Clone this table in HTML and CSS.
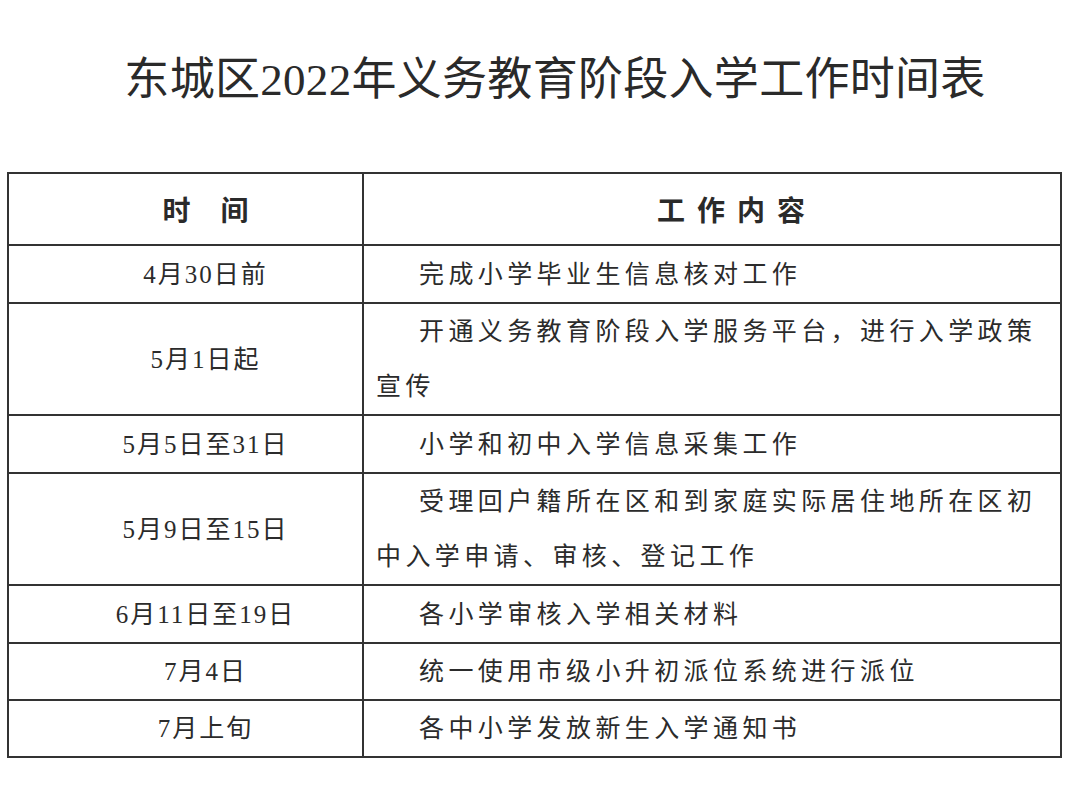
FILE: index.html
```html
<!DOCTYPE html>
<html lang="zh-CN">
<head>
<meta charset="utf-8">
<title>东城区2022年义务教育阶段入学工作时间表</title>
<link rel="stylesheet" href="styles.css">
</head>
<body>
<div class="page">
  <h1 class="title">东城区2022年义务教育阶段入学工作时间表</h1>
  <table class="schedule">
    <colgroup>
      <col class="col-time">
      <col class="col-work">
    </colgroup>
    <thead>
      <tr>
        <th class="h-time"><span class="gap">时</span>间</th>
        <th class="h-work">工作内容</th>
      </tr>
    </thead>
    <tbody>
      <tr>
        <td class="time">4月30日前</td>
        <td class="work">完成小学毕业生信息核对工作</td>
      </tr>
      <tr>
        <td class="time">5月1日起</td>
        <td class="work">开通义务教育阶段入学服务平台，进行入学政策宣传</td>
      </tr>
      <tr>
        <td class="time">5月5日至31日</td>
        <td class="work">小学和初中入学信息采集工作</td>
      </tr>
      <tr>
        <td class="time">5月9日至15日</td>
        <td class="work">受理回户籍所在区和到家庭实际居住地所在区初中入学申请、审核、登记工作</td>
      </tr>
      <tr>
        <td class="time">6月11日至19日</td>
        <td class="work">各小学审核入学相关材料</td>
      </tr>
      <tr class="short">
        <td class="time">7月4日</td>
        <td class="work">统一使用市级小升初派位系统进行派位</td>
      </tr>
      <tr class="short">
        <td class="time">7月上旬</td>
        <td class="work">各中小学发放新生入学通知书</td>
      </tr>
    </tbody>
  </table>
</div>
</body>
</html>
```

FILE: styles.css
```css
html, body {
  margin: 0;
  padding: 0;
  background: #ffffff;
}

body {
  font-family: "Liberation Serif", "Noto Sans CJK SC", serif;
  color: #2b2b2b;
}

.page {
  width: 1080px;
  height: 785px;
  padding-top: 52px;
  box-sizing: border-box;
}

.title {
  margin: 0 0 64px 0;
  padding-left: 30px;
  height: 56px;
  line-height: 56px;
  font-size: 45px;
  font-weight: 400;
  letter-spacing: 0.3px;
  text-align: center;
  color: #2a2a2a;
}

.schedule {
  margin-left: 7px;
  width: 1055px;
  border-collapse: collapse;
  table-layout: fixed;
}

.col-time {
  width: 355px;
}

.schedule th,
.schedule td {
  border: 2px solid #333333;
  padding: 0;
}

.schedule th {
  height: 70px;
  font-size: 28px;
  font-weight: 700;
  text-align: center;
  vertical-align: middle;
  color: #2a2a2a;
}

.schedule th.h-time {
  padding-left: 40px;
}

.h-time .gap {
  margin-right: 30px;
}

.schedule th.h-work {
  padding-left: 50px;
  letter-spacing: 12px;
}

.schedule td {
  height: 56px;
  font-size: 25px;
  line-height: 55px;
  letter-spacing: 4.4px;
  vertical-align: middle;
}

.schedule tr.short td {
  height: 55px;
}

.schedule td.time {
  text-align: center;
  padding-left: 40px;
  letter-spacing: 2px;
}

.schedule td.work {
  padding: 0 12px 0 12px;
  text-indent: 43px;
  text-align: left;
}
```
